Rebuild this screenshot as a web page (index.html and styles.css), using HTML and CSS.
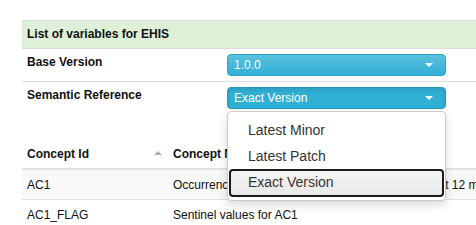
FILE: index.html
```html
<!DOCTYPE html>
<html lang="en">
<head>
  <meta charset="UTF-8">
  <title>EHIS variables</title>
  <link rel="stylesheet" href="styles.css">
</head>
<body>
<div class="page">
  <div class="panel">
    <div class="panel-heading">List of variables for EHIS</div>

    <div class="form-row">
      <div class="form-label">Base Version</div>
      <div class="form-field">
        <div class="picker">
          <span class="picker-text">1.0.0</span>
          <span class="caret"></span>
        </div>
      </div>
    </div>

    <div class="form-row last">
      <div class="form-label">Semantic Reference</div>
      <div class="form-field">
        <div class="picker open">
          <span class="picker-text">Exact Version</span>
          <span class="caret"></span>
        </div>
        <ul class="picker-menu">
          <li>Latest Minor</li>
          <li>Latest Patch</li>
          <li class="selected">Exact Version</li>
        </ul>
      </div>
    </div>
  </div>

  <table class="concepts">
    <thead>
      <tr>
        <th class="col-id">Concept Id <span class="sort-icon"></span></th>
        <th>Concept Name</th>
      </tr>
    </thead>
    <tbody>
      <tr class="odd">
        <td>AC1</td>
        <td>Occurrence of an accident causing injury in the past 12 months</td>
      </tr>
      <tr>
        <td>AC1_FLAG</td>
        <td>Sentinel values for AC1</td>
      </tr>
    </tbody>
  </table>
</div>
</body>
</html>
```

FILE: styles.css
```css
body {
  margin: 0;
  font-family: 'Liberation Sans', Arial, sans-serif;
  font-size: 12px;
  color: #111;
  background: #fff;
  overflow: hidden;
}

.page {
  padding: 20px 0 0 22px;
  width: 700px;
}

.panel {
  border-top: 1px solid #dcdcdc;
}

.panel-heading {
  background-color: #dff0d8;
  height: 27px;
  line-height: 27px;
  padding: 0 5px;
  font-weight: bold;
  border-bottom: 1px solid #dcdcdc;
}

.form-row {
  display: flex;
  height: 32px;
  border-bottom: 1px solid #dcdcdc;
}

.form-row.last {
  border-bottom: none;
}

.form-label {
  width: 195px;
  padding: 6px 5px 0;
  font-weight: bold;
}

.form-field {
  position: relative;
  padding-top: 5px;
}

.picker {
  width: 219px;
  height: 22px;
  box-sizing: border-box;
  display: flex;
  align-items: center;
  justify-content: space-between;
  padding: 0 12px 0 6px;
  border-radius: 4px;
  border: 1px solid #28a4c9;
  background: linear-gradient(#5bc0de, #31b0d5);
  color: #fff;
}

.picker.open {
  background: #31b0d5;
  border-color: #269abc;
  box-shadow: inset 0 2px 4px rgba(0, 0, 0, 0.12);
}

.caret {
  width: 0;
  height: 0;
  border-left: 4px solid transparent;
  border-right: 4px solid transparent;
  border-top: 4px solid #fff;
}

.picker-menu {
  position: absolute;
  left: 0;
  top: 29px;
  width: 219px;
  box-sizing: border-box;
  margin: 0;
  padding: 5px 0 3px;
  list-style: none;
  background: #fff;
  border: 1px solid #ccc;
  border-radius: 4px;
  box-shadow: 0 4px 10px rgba(0, 0, 0, 0.15);
  font-size: 14px;
  color: #333;
  z-index: 10;
}

.picker-menu li {
  height: 26px;
  line-height: 26px;
  padding-left: 20px;
}

.picker-menu li.selected {
  margin: 0 1px;
  height: 24px;
  line-height: 22px;
  padding-left: 17px;
  border: 2px solid #1a1a1a;
  border-radius: 4px;
  background: linear-gradient(#f5f5f5, #e8e8e8);
}

.concepts {
  margin-top: 31px;
  border-collapse: collapse;
  width: 700px;
}

.concepts th,
.concepts td {
  text-align: left;
  padding: 0 5px;
  white-space: nowrap;
}

.concepts th {
  height: 21px;
  vertical-align: top;
  padding-top: 2px;
  border-bottom: 2px solid #e2e2e2;
}

.concepts .col-id {
  width: 136px;
  position: relative;
}

.sort-icon {
  position: absolute;
  right: 6px;
  top: 6px;
  width: 0;
  height: 0;
  border-left: 4px solid transparent;
  border-right: 4px solid transparent;
  border-bottom: 4px solid #aaa;
}

.concepts td {
  height: 29px;
  border-bottom: 1px solid #e2e2e2;
}

.concepts tr.odd td {
  background-color: #f9f9f9;
}
```
